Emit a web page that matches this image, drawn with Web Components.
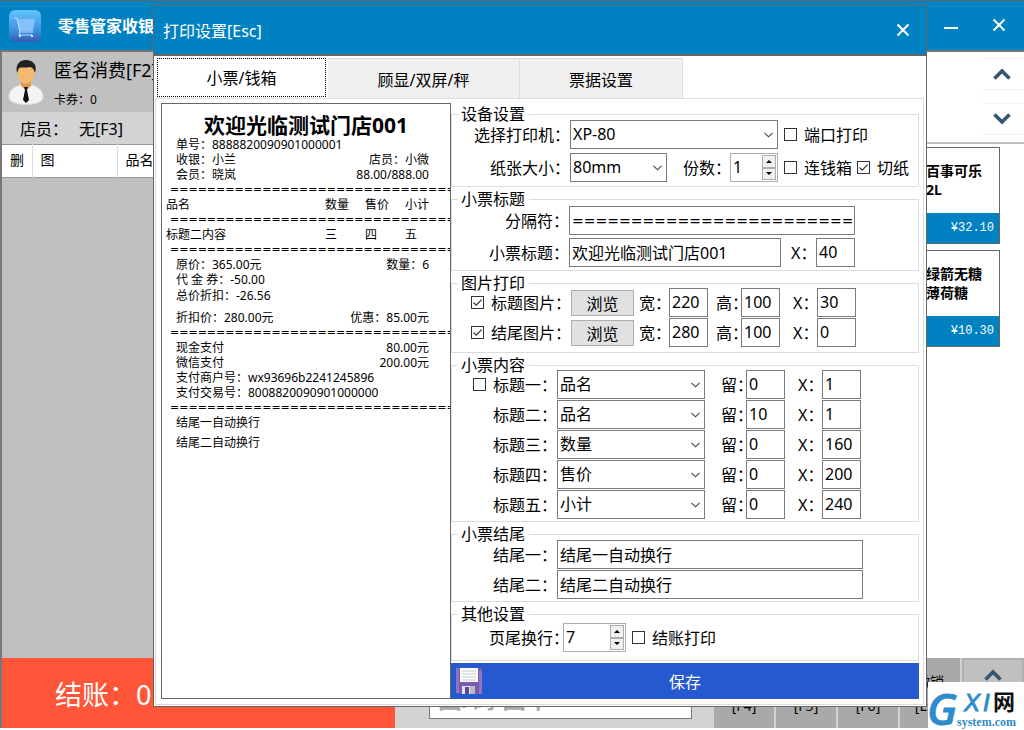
<!DOCTYPE html>
<html lang="zh-CN">
<head>
<meta charset="utf-8">
<title>零售管家收银</title>
<style>
html, body { margin: 0; min-height: 100%; }
body { font: 16px/20px "Noto Sans", "Noto Sans CJK SC", sans-serif; color: #000; background: #fff; }
</style>
</head>
<body>
<pos-app></pos-app>

<script>
const base = `<style>
*, *::before, *::after { box-sizing: border-box; }
button, input, select { font: inherit; color: inherit; border-radius: 0; margin: 0; }
h1, h2, p { margin: 0; font-weight: normal; }
</style>`;

class Base extends HTMLElement {
  connectedCallback() {
    if (this.shadowRoot) return;
    this.attachShadow({ mode: 'open' }).innerHTML = base + this.render();
  }
  attr(n, d = '') { return this.hasAttribute(n) ? this.getAttribute(n) : d; }
}

/* Label with a text box, drop-down or number box */
customElements.define('ui-field', class extends Base {
  render() {
    const kind = this.attr('kind', 'text'), v = this.attr('value');
    const name = this.attr('label').replace(/：/g, '');
    let ctl;
    if (kind === 'select') {
      ctl = `<select id="c">${v.split(',').map(o => `<option>${o}</option>`).join('')}</select>
        <svg class="arrow" viewBox="0 0 9 6"><path d="M.5.8 4.5 4.8 8.5.8" fill="none" stroke="#444" stroke-width="1.1"/></svg>`;
    } else if (kind === 'number') {
      ctl = `<input id="c" type="number" value="${v}"><span class="spin">
        <button type="button" aria-label="${name}加"><svg viewBox="0 0 6 3"><path d="M0 3 3 0 6 3z"/></svg></button>
        <button type="button" aria-label="${name}减"><svg viewBox="0 0 6 3"><path d="M0 0 3 3 6 0z"/></svg></button></span>`;
    } else ctl = `<input id="c" type="text" value="${v}">`;
    return `<style>
      :host { display: inline-flex; align-items: center; height: 29px; }
      label { flex: none; width: ${this.attr('lw', '25')}px; padding-top: 1px; white-space: nowrap;
              display: flex; justify-content: ${this.hasAttribute('end') ? 'flex-end' : 'flex-start'}; }
      .box { position: relative; display: flex; width: ${this.attr('w', '39')}px; height: 29px; background: #fff;
             border: 1px solid ${kind === 'number' ? '#abadb3' : '#7a7a7a'}; }
      input, select { appearance: none; -moz-appearance: textfield; flex: 1; min-width: 0; width: 100%; height: 27px; line-height: 25px;
             padding: 0 2px; border: 0; outline: 0; background: #fff; }
      input { padding-bottom: 2px; }
      input::-webkit-inner-spin-button { display: none; }
      :host([rule]) input { font: 14px/25px "DejaVu Sans", sans-serif; padding: 0 2px; }
      .arrow { position: absolute; right: 4px; top: 11px; width: 9px; height: 6px; pointer-events: none; }
      .spin { display: flex; flex-direction: column; width: 14px; margin: 1px; }
      .spin button { flex: 1; padding: 0; border: 1px solid #adadad; background: #f0f0f0; display: grid; place-items: center; min-height: 0; }
      .spin svg { width: 6px; height: 3px; }
    </style><label for="c">${this.attr('label')}</label><span class="box">${ctl}</span>`;
  }
});

customElements.define('ui-check', class extends Base {
  render() {
    return `<style>
      :host { display: inline-flex; height: 29px; align-items: center; justify-content: flex-end; }
      label { display: flex; align-items: center; gap: 7px; white-space: nowrap; }
      .m { position: relative; width: 13px; height: 13px; }
      input { appearance: none; display: block; width: 13px; height: 13px; border: 1px solid #333; background: #fff; }
      svg { position: absolute; left: 0; top: 0; width: 13px; height: 13px; display: none; pointer-events: none; }
      input:checked + svg { display: block; }
      .t { padding-top: 1px; }
    </style><label><span class="m"><input type="checkbox" ${this.hasAttribute('checked') ? 'checked' : ''}>
      <svg viewBox="0 0 13 13"><path d="M2.5 6.5 5.2 9.2 10.6 3.6" fill="none" stroke="#333" stroke-width="1.2"/></svg></span>
      <span class="t"><slot></slot></span></label>`;
  }
});

customElements.define('ui-group', class extends Base {
  render() {
    return `<style>
      :host { display: block; }
      fieldset { margin: 0; min-width: 0; padding: 0; border: 1px solid #dcdcdc; }
      legend { margin-left: 6px; padding: 0 4px 0 3px; line-height: 10px; height: 10px; }
      .c { display: flex; flex-direction: column; gap: var(--gap, 1px); padding: var(--pt, 1px) 0 var(--pb, 2px); }
    </style><fieldset><legend>${this.attr('legend')}</legend><div class="c"><slot></slot></div></fieldset>`;
  }
});

/* Receipt preview */
customElements.define('receipt-preview', class extends Base {
  render() {
    const eq = '='.repeat(31);
    const line = (a, b = '') => `<p><span>${a}</span><span>${b}</span></p>`;
    return `<style>
      :host { display: block; border: 1px solid #666; background: #fff; overflow: hidden; font-size: 12px; line-height: 15px; padding-top: 9px; }
      h2 { font-size: 21px; line-height: 24px; font-weight: bold; text-align: center; }
      p { display: flex; justify-content: space-between; padding: 0 21px 0 14px; white-space: pre; }
      .eq { font: 11px/15px "DejaVu Sans", sans-serif; padding: 0 0 0 8px; white-space: nowrap; overflow: hidden; }
      table { border-collapse: collapse; width: 100%; table-layout: fixed; }
      th, td { padding: 0; height: 15px; text-align: left; font-weight: normal; }
      th:first-child, td:first-child { padding-left: 4px; }
      td.eq:first-child { padding-left: 8px; }
      .n { width: 40px; } .l { width: 45px; }
      .s2 p { line-height: 18px; } .s3 { padding-top: 5px; } .s4 p + p { line-height: 25px; }
    </style>
    <h2>欢迎光临测试门店001</h2>
    ${line('单号：8888820090901000001')}${line('收银：小兰', '店员：小微')}${line('会员：晓岚', '88.00/888.00')}
    <div class="eq">${eq}</div>
    <table>
      <colgroup><col><col class="n"><col class="n"><col class="l"></colgroup>
      <tr><th>品名</th><th>数量</th><th>售价</th><th>小计</th></tr>
      <tr><td colspan="4" class="eq">${eq}</td></tr>
      <tr><td>标题二内容</td><td>三</td><td>四</td><td>五</td></tr>
    </table>
    <div class="eq">${eq}</div>
    ${line('原价：365.00元', '数量：6')}${line('代 金 券：-50.00')}
    <div class="s2">${line('总价折扣：-26.56')}</div>
    <div class="s3">${line('折扣价：280.00元', '优惠：85.00元')}</div>
    <div class="eq">${eq}</div>
    ${line('现金支付', '80.00元')}${line('微信支付', '200.00元')}${line('支付商户号：wx93696b2241245896')}${line('支付交易号：8008820090901000000')}
    <div class="eq">${eq}</div>
    <div class="s4">${line('结尾一自动换行')}${line('结尾二自动换行')}</div>`;
  }
});

customElements.define('print-dialog', class extends Base {
  render() {
    const nums = ['一', '二', '三', '四', '五'], val = ['品名', '品名', '数量', '售价', '小计'],
      keep = [0, 10, 0, 0, 0], xs = [1, 1, 160, 200, 240];
    const rows = nums.map((n, i) => `<div class="row">${i === 0
      ? `<ui-check class="c105">标题一：</ui-check><ui-field label="" lw="0" kind="select" w="148" value="${val[0]}"></ui-field>`
      : `<ui-field end lw="105" label="标题${n}：" kind="select" w="148" value="${val[i]}"></ui-field>`}
      <ui-field class="g16" label="留：" value="${keep[i]}"></ui-field>
      <ui-field class="g13" lw="24" label="X：" value="${xs[i]}"></ui-field></div>`).join('');
    const pic = (t, w, x) => `<div class="row"><ui-check class="c119" checked>${t}图片：</ui-check>
      <button class="browse" type="button">浏览</button>
      <ui-field class="g5" lw="30" label="宽：" value="${w}"></ui-field>
      <ui-field class="g8" label="高：" value="100"></ui-field>
      <ui-field class="g13" lw="24" label="X：" value="${x}"></ui-field></div>`;
    return `<style>
      :host { display: block; background: #fff; border: 1px solid #666; }
      header { display: flex; justify-content: space-between; align-items: center; height: 50px; padding: 0 15px 0 9px;
               background: #0081c2; color: #fff; border-bottom: 2px solid #666; }
      h1 { font-size: 16px; line-height: 20px; padding-top: 1px; }
      header button { width: 16px; height: 16px; padding: 1px; border: 0; background: none; }
      header svg { display: block; width: 14px; height: 14px; }
      nav { display: flex; height: 42px; padding-left: 3px; align-items: flex-end; }
      nav button { height: 40px; padding: 2px 0 0; border: 1px solid #dcdcdc; border-width: 1px 1px 0 0; background: #f0f0f0; }
      nav .on { width: 169px; margin-right: 2px; border: 1px dotted #000; background: #fff; height: 39px; align-self: flex-start; margin-top: 2px; padding: 0; }
      nav .b { width: 192px; } nav .c { width: 163px; }
      .pane { display: flex; margin: 0 2px 1px 1px; border: 1px solid #dcdcdc; padding: 4px 4px 5px 5px; }
      receipt-preview { width: 290px; flex: none; }
      form { flex: 1; min-width: 0; padding-top: 6px; display: flex; flex-direction: column; gap: 7px; }
      .row { display: flex; align-items: center; }
      .g5 { margin-left: 5px; } .g6 { margin-left: 6px; } .g8 { margin-left: 8px; } .g10 { margin-left: 10px; } .g13 { margin-left: 13px; } .g16 { margin-left: 16px; }
      .c119 { width: 119px; } .c105 { width: 105px; } .in { padding-left: 37px; }
      .browse { width: 63px; height: 26px; padding: 2px 0 0; line-height: 20px; border: 1px solid #adadad; background: #e1e1e1; }
      .dev { --gap: 4px; --pb: 4px; } .ttl { --gap: 3px; --pt: 2px; --pb: 3px; } .img { --pt: 0px; --pb: 5px; } .cnt { --pt: 0px; } .oth { --pt: 4px; --pb: 8px; }
      .save { position: relative; display: flex; align-items: center; justify-content: center; height: 36px; margin-top: -5px; padding: 2px 0 0; border: 0; background: #2559d0; color: #fff; }
      .save svg { position: absolute; left: 5px; top: 5px; width: 26px; height: 26px; }
    </style>
    <header><h1>打印设置[Esc]</h1><button type="button" aria-label="关闭"><svg viewBox="0 0 14 14"><path d="M1.5 1.5 12.5 12.5M12.5 1.5 1.5 12.5" stroke="#fff" stroke-width="2"/></svg></button></header>
    <nav><button class="on">小票/钱箱</button><button class="b">顾显/双屏/秤</button><button class="c">票据设置</button></nav>
    <div class="pane">
      <receipt-preview></receipt-preview>
      <form>
        <ui-group class="dev" legend="设备设置">
          <div class="row"><ui-field end lw="118" kind="select" w="208" label="选择打印机：" value="XP-80"></ui-field><ui-check class="g6">端口打印</ui-check></div>
          <div class="row"><ui-field end lw="118" kind="select" w="97" label="纸张大小：" value="80mm"></ui-field>
            <ui-field class="g16" lw="47" kind="number" w="48" label="份数：" value="1"></ui-field>
            <ui-check class="g6">连钱箱</ui-check><ui-check class="g5" checked>切纸</ui-check></div>
        </ui-group>
        <ui-group class="ttl" legend="小票标题">
          <div class="row"><ui-field rule end lw="117" w="286" label="分隔符：" value="========================="></ui-field></div>
          <div class="row"><ui-field end lw="117" w="212" label="小票标题：" value="欢迎光临测试门店001"></ui-field>
            <ui-field class="g10" lw="25" label="X：" value="40"></ui-field></div>
        </ui-group>
        <ui-group class="img" legend="图片打印">${pic('标题', 220, 30)}${pic('结尾', 280, 0)}</ui-group>
        <ui-group class="cnt" legend="小票内容">${rows}</ui-group>
        <ui-group legend="小票结尾">
          <div class="row"><ui-field end lw="105" w="306" label="结尾一：" value="结尾一自动换行"></ui-field></div>
          <div class="row"><ui-field end lw="105" w="306" label="结尾二：" value="结尾二自动换行"></ui-field></div>
        </ui-group>
        <ui-group class="oth" legend="其他设置">
          <div class="row in"><ui-field lw="74" kind="number" w="63" label="页尾换行：" value="7"></ui-field><ui-check class="g6">结账打印</ui-check></div>
        </ui-group>
        <button class="save" type="button"><svg viewBox="0 0 26 26"><path d="M0 0h26v26H2l-2-2z" fill="#7a5bb0"/><path d="M0 0h3v25H0zM23 3h3v23h-3z" fill="#9173c4"/><path d="M4 0h18v14H4z" fill="#fbfbfb"/><path d="M6 3h14M6 6h14M6 9h14M6 12h14" stroke="#ccc"/><path d="M6 18h13v8H6z" fill="#e4e4ea"/><path d="M9 19h4v7H9z" fill="#5c4a92"/><path d="M14 18h5v8h-5z" fill="#b9b9c4"/></svg>保存</button>
      </form>
    </div>`;
  }
});

customElements.define('product-card', class extends Base {
  render() {
    return `<style>
      :host { display: block; border: 1px solid #666; background: #fff; }
      .n { height: 65px; padding: 13px 16px 0 30px; font-size: 14px; line-height: 19px; font-weight: bold; white-space: pre-line; }
      .p { height: 30px; line-height: 30px; padding-right: 5px; text-align: right; background: #0081c2; color: #fff; font-family: "Liberation Mono", monospace; font-size: 12px; }
    </style><div class="n"><slot></slot></div><div class="p">${this.attr('price')}</div>`;
  }
});

customElements.define('pos-app', class extends Base {
  render() {
    const chev = d => `<svg width="18" height="12" viewBox="0 0 18 12"><path d="${d}" fill="none" stroke="#33566f" stroke-width="3.6"/></svg>`;
    const up = chev('M1.5 10.5 9 3 16.5 10.5'), down = chev('M1.5 1.5 9 9 16.5 1.5');
    return `<style>
      :host { display: flex; flex-direction: column; position: relative; min-height: 100vh; background: #fff; overflow: hidden; }
      header { display: flex; align-items: center; height: 52px; padding: 0 17px 0 9px; background: #0081c2; color: #fff;
               border-top: 1px solid #666; border-bottom: 2px solid #777; }
      header svg.logo { width: 32px; height: 32px; }
      h1 { flex: 1; margin-left: 17px; font-size: 16px; font-weight: bold; }
      header button { width: 16px; height: 16px; margin-left: 32px; padding: 0 1px 2px; border: 0; background: none; }
      header button svg { display: block; width: 14px; height: 14px; }
      .body { flex: 1; display: flex; border-left: 2px solid #777; margin-bottom: 2px; }
      aside { width: 393px; display: flex; flex-direction: column; background: #c0c0c0; }
      .user { display: flex; height: 60px; padding: 7px 5px 0; }
      .user svg { width: 38px; height: 48px; }
      .user div { margin-left: 9px; } .user b { display: block; font-weight: normal; font-size: 18px; line-height: 22px; }
      .user small { display: block; font-size: 12px; line-height: 16px; margin-top: 11px; }
      .clerk { display: flex; gap: 11px; height: 32px; padding: 7px 18px 0; background: #d3d3d3; }
      table { border-collapse: collapse; width: 100%; table-layout: fixed; font-size: 14px; background: #fff; border-top: 1px solid #999; border-bottom: 1px solid #999; }
      th { height: 33px; padding: 0 0 2px 8px; font-weight: normal; text-align: left; border-right: 1px solid #dcdcdc; }
      .pay { margin-top: auto; display: flex; align-items: center; height: 70px; padding: 4px 53px 0; background: #ff5538; color: #fff; font-size: 27px; line-height: 32px; }
      main { flex: 1; min-width: 0; display: flex; flex-direction: column; }
      .cats { display: flex; justify-content: flex-end; height: 92px; padding: 6px 2px 0 0; border-bottom: 2px solid #c0c0c0; }
      .cats div { display: flex; flex-direction: column; gap: 13px; width: 40px; }
      .cats button { height: 32px; padding: 0; border: 1px solid #f0f0f0; border-width: 1px 0; background: #fff; }
      .goods { flex: 1; display: flex; flex-direction: column; align-items: flex-end; gap: 6px; padding: 3px 24px 0 0; }
      product-card { width: 105px; }
      .foot { display: flex; height: 70px; background: #d3d3d3; }
      .find { width: 263px; height: 42px; margin: 19px 22px 0 34px; padding: 0 8px; border: 1px solid #7a7a7a; background: #fff; font-size: 24px; font-weight: bold; outline: 0; }
      .find::placeholder { color: #a9a9a9; }
      .keys { flex: 1; display: flex; gap: 2px; min-width: 0; }
      .keys button { flex: none; width: 60px; padding: 0 0 10px; border: 0; background: #a9a9a9; font-size: 14px; line-height: 24px;
                     display: flex; flex-direction: column; align-items: center; justify-content: flex-end; }
      .keys .up { width: auto; flex: 1; justify-content: flex-start; padding: 9px 0 0; border: 2px solid #b0b0b0; background: #c0c0c0; }
      .mark { position: absolute; right: 0; bottom: 0; width: 96px; height: 48px; background: #fff; }
      .mark svg { display: block; width: 96px; height: 48px; }
      print-dialog { position: absolute; top: 5px; left: 153px; right: 97px; }
    </style>
    <header>
      <svg class="logo" viewBox="0 0 32 32"><defs><linearGradient id="g" x2="0" y2="1"><stop stop-color="#63c4fa"/><stop offset=".65" stop-color="#3d8fe0"/><stop offset="1" stop-color="#3659b0"/></linearGradient></defs><rect width="32" height="32" rx="6" fill="url(#g)"/><path d="M8 9h18l-2 12H10z" fill="#84c0fb"/><path d="M5 8h3l3 14h13M11 22l-1 3h13" fill="none" stroke="#bfe0ff" stroke-width="1"/><circle cx="11" cy="26" r="1.2" fill="#d0e8ff"/><circle cx="23" cy="26" r="1.2" fill="#d0e8ff"/></svg>
      <h1>零售管家收银</h1>
      <button aria-label="最小化"><svg viewBox="0 0 14 14"><path d="M0 10h14" stroke="#fff" stroke-width="2"/></svg></button>
      <button aria-label="关闭"><svg viewBox="0 0 14 14"><path d="M1.5 1.5 12.5 12.5M12.5 1.5 1.5 12.5" stroke="#fff" stroke-width="2"/></svg></button>
    </header>
    <div class="body">
      <aside>
        <div class="user">
          <svg viewBox="0 0 38 48"><path d="M2 38c0-7 6-11 12-12h10c6 1 12 5 12 12 1 10-35 10-34 0z" fill="#f4f4f4" stroke="#ddd"/><path d="M14 22h10v5l-5 4-5-4z" fill="#dd9950"/><ellipse cx="19" cy="14" rx="8.500" ry="11" fill="#f5b870"/><path d="M10 14C8 5 13 1 19 1s12 4 9 13c-1-4-3-6-5-6-4 1-9 0-11 1z" fill="#222"/><path d="M17 28h4l-1 3 2 10-3 3-3-3 2-10z" fill="#111"/></svg>
          <div><b>匿名消费[F2]</b><small>卡券：0</small></div>
        </div>
        <div class="clerk"><span>店员：</span><span>无[F3]</span></div>
        <table><colgroup><col style="width:30px"><col style="width:85px"><col></colgroup><tr><th>删</th><th>图</th><th>品名</th></tr></table>
        <div class="pay">结账：0</div>
      </aside>
      <main>
        <div class="cats"><div><button aria-label="上一页">${up}</button><button aria-label="下一页">${down}</button></div></div>
        <div class="goods">
          <product-card price="¥32.10">百事可乐
2L</product-card>
          <product-card price="¥10.30">绿箭无糖
薄荷糖</product-card>
        </div>
        <div class="foot"><input class="find" type="text" aria-label="查找商品" placeholder="国/码 国中">
          <div class="keys"><button>[F4]</button><button>[F5]</button><button>[F6]</button><button><span>撤销</span><span>[Esc]</span></button><button class="up" aria-label="展开">${up}</button></div></div>
      </main>
    </div>
    <print-dialog role="dialog" aria-label="打印设置"></print-dialog>
    <div class="mark"><svg viewBox="0 0 96 48" role="img">
      <text x="-1" y="43" font-family="Noto Sans" font-style="italic" font-weight="500" font-size="44" fill="#2f8ccc" stroke="#2f8ccc">G</text>
      <text x="36" y="29" font-family="Liberation Sans" font-style="italic" font-size="24" fill="#2f8ccc" stroke="#2f8ccc">X</text>
      <text x="55" y="29" font-family="Liberation Sans" font-style="italic" font-size="24" fill="#2f8ccc" stroke="#2f8ccc">I</text>
      <text x="65" y="28" font-family="Noto Sans CJK SC" font-weight="bold" font-size="22" fill="#111">网</text>
      <text x="29" y="44" font-family="Liberation Serif" font-weight="bold" font-size="12" fill="#2f8ccc">system.com</text></svg></div>`;
  }
});
</script>
</body>
</html>
